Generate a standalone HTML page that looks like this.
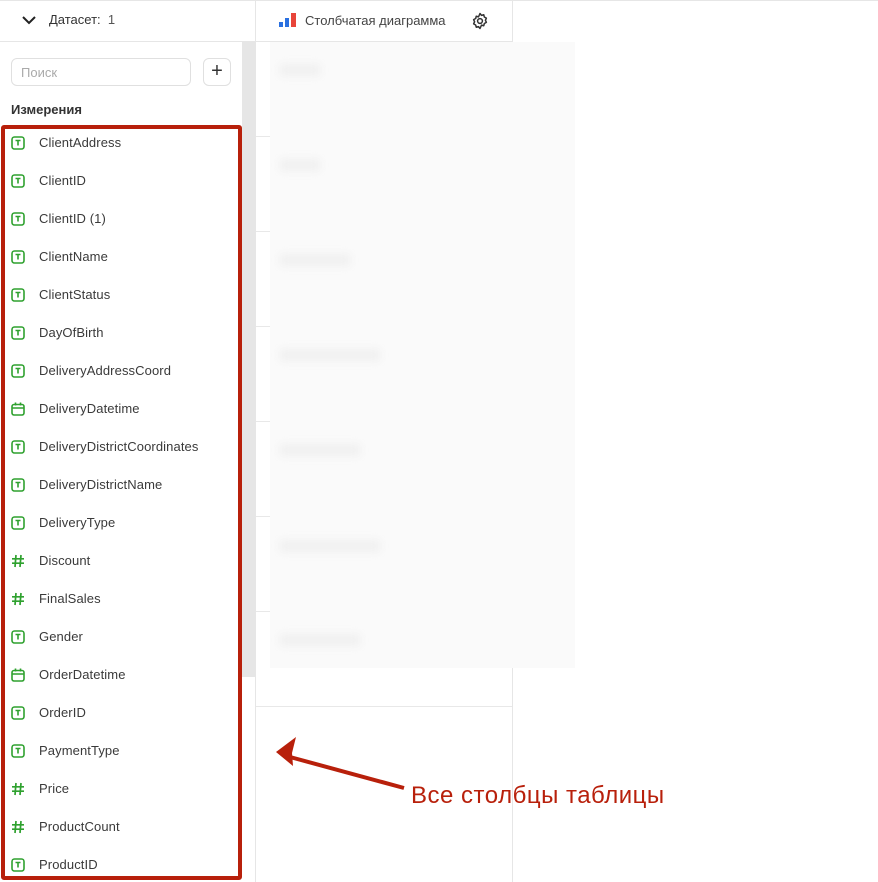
<!DOCTYPE html>
<html><head><meta charset="utf-8"><style>
*{margin:0;padding:0;box-sizing:border-box}
body{width:878px;height:882px;background:#fff;position:relative;overflow:hidden;font-family:"Liberation Sans","Noto Sans CJK SC",sans-serif;color:#333}
.a{position:absolute}
.row{position:absolute;left:11px;height:20px;font-size:13px;line-height:20px;color:#3a3a3a}
.row span{position:absolute;left:28px;white-space:nowrap;letter-spacing:0.1px}
.ic{position:absolute;left:0;top:3px;width:14px;height:14px}
.hl{position:absolute;left:256px;width:256px;height:1px;background:#e8e8e8}
.bl{position:absolute;height:12px;background:#f0f0f0;filter:blur(4px)}
</style></head><body>
<div class="a" style="left:0;top:0;width:878px;height:1px;background:#e6e6e6"></div>
<div class="a" style="left:255px;top:0;width:1px;height:882px;background:#e6e6e6"></div>
<div class="a" style="left:512px;top:0;width:1px;height:882px;background:#e6e6e6"></div>
<div class="a" style="left:0;top:41px;width:512px;height:1px;background:#e6e6e6"></div>
<svg class="a" style="left:22px;top:15px" width="14" height="10"><path d="M1 2l6 6 6-6" fill="none" stroke="#222" stroke-width="2"/></svg>
<div class="a" style="left:49px;top:12px;font-size:13px;color:#333">Датасет:&nbsp; <span style="color:#555">1</span></div>
<svg class="a" style="left:279px;top:13px" width="17" height="15"><rect x="0" y="9" width="4" height="5" fill="#2a70e0"/><rect x="6" y="5" width="4" height="9" fill="#2a70e0"/><rect x="12" y="0" width="5" height="14" fill="#e8453a"/></svg>
<div class="a" style="left:305px;top:13px;font-size:13px;color:#444">Столбчатая диаграмма</div>
<svg class="a" style="left:471px;top:12px" width="18" height="18" viewBox="0 0 24 24"><path d="M12 2l2 2.5 3-.8.8 3 2.7 1.5-1.3 2.8 1.3 2.8-2.7 1.5-.8 3-3-.8L12 22l-2-2.5-3 .8-.8-3L3.5 15.8 4.8 13 3.5 10.2 6.2 8.7l.8-3 3 .8z" fill="none" stroke="#333" stroke-width="2" stroke-linejoin="round"/><circle cx="12" cy="12" r="3.2" fill="none" stroke="#333" stroke-width="2"/></svg>
<div class="a" style="left:11px;top:58px;width:180px;height:28px;border:1px solid #e0e0e0;border-radius:6px;font-size:13px;color:#aaa;padding:6px 9px">Поиск</div>
<div class="a" style="left:203px;top:58px;width:28px;height:28px;border:1px solid #e0e0e0;border-radius:6px;font-size:20px;line-height:25px;text-align:center;color:#333">+</div>
<div class="a" style="left:11px;top:102px;font-size:13px;font-weight:bold;color:#333">Измерения</div>
<div class="a" style="left:242px;top:42px;width:13px;height:635px;background:#e6e6e6"></div>
<div class="hl" style="top:136px"></div><div class="hl" style="top:231px"></div><div class="hl" style="top:326px"></div><div class="hl" style="top:421px"></div><div class="hl" style="top:516px"></div><div class="hl" style="top:611px"></div><div class="hl" style="top:706px"></div>
<div class="a" style="left:270px;top:42px;width:305px;height:626px;background:#fafafa"></div>
<div class="bl" style="left:280px;top:64px;width:40px"></div>
<div class="bl" style="left:280px;top:159px;width:40px"></div>
<div class="bl" style="left:280px;top:254px;width:70px"></div>
<div class="bl" style="left:280px;top:349px;width:100px"></div>
<div class="bl" style="left:280px;top:444px;width:80px"></div>
<div class="bl" style="left:280px;top:540px;width:100px"></div>
<div class="bl" style="left:280px;top:634px;width:80px"></div>
<div id="list"></div>
<div class="a" style="left:1px;top:125px;width:241px;height:755px;border:4px solid #b8200b;border-radius:3px"></div>
<svg class="a" style="left:0;top:0" width="878" height="882"><path d="M404 788L290 757" stroke="#b8200b" stroke-width="4"/><path d="M276 752l20-15-4 16 1 13z" fill="#b8200b"/></svg>
<div class="a" style="left:411px;top:782px;font-size:24px;color:#b8200b;letter-spacing:0.5px">Все столбцы таблицы</div>
<script>
var T='<svg class="ic" viewBox="0 0 14 14"><rect x="1" y="1" width="12" height="12" rx="2.5" fill="none" stroke="#2fa12f" stroke-width="1.6"/><path d="M4.5 4.5h5M7 4.5v5" stroke="#2fa12f" stroke-width="1.6"/></svg>';
var D='<svg class="ic" viewBox="0 0 14 14"><rect x="1" y="2.5" width="12" height="10.5" rx="2" fill="none" stroke="#2fa12f" stroke-width="1.6"/><path d="M1 6h12M4.5 0.5v3M9.5 0.5v3" stroke="#2fa12f" stroke-width="1.6"/></svg>';
var H='<svg class="ic" viewBox="0 0 14 14"><path d="M5 1L4 13M10 1L9 13M1 4.8h12M1 9.2h12" stroke="#2fa12f" stroke-width="1.7"/></svg>';
var items=[[T,'ClientAddress'],[T,'ClientID'],[T,'ClientID (1)'],[T,'ClientName'],[T,'ClientStatus'],[T,'DayOfBirth'],[T,'DeliveryAddressCoord'],[D,'DeliveryDatetime'],[T,'DeliveryDistrictCoordinates'],[T,'DeliveryDistrictName'],[T,'DeliveryType'],[H,'Discount'],[H,'FinalSales'],[T,'Gender'],[D,'OrderDatetime'],[T,'OrderID'],[T,'PaymentType'],[H,'Price'],[H,'ProductCount'],[T,'ProductID']];
var h='';items.forEach(function(it,i){h+='<div class="row" style="top:'+(133+i*38)+'px">'+it[0]+'<span>'+it[1]+'</span></div>';});
document.getElementById('list').innerHTML=h;
</script>
</body></html>
